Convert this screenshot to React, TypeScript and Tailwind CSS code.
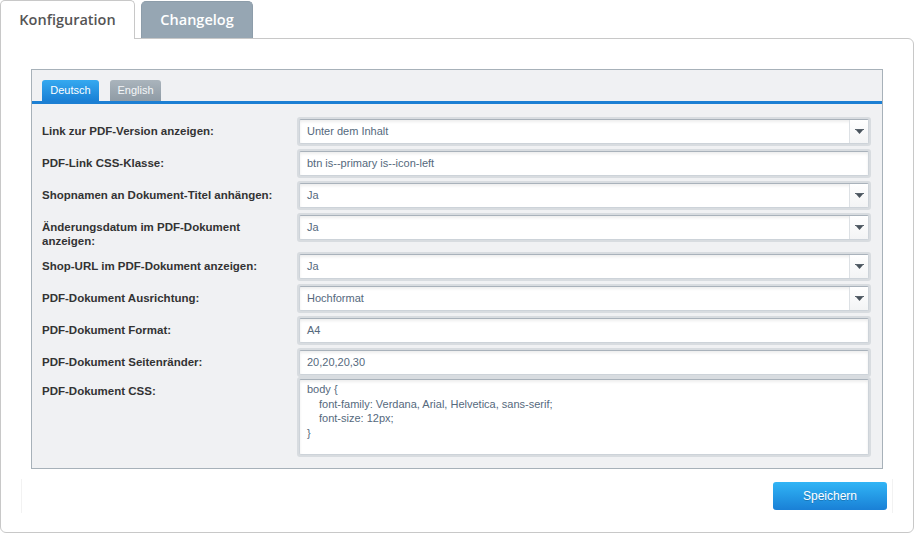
import React from "react";

type Row = {
  label: string;
  value: string;
  select?: boolean;
};

const rows: Row[] = [
  { label: "Link zur PDF-Version anzeigen:", value: "Unter dem Inhalt", select: true },
  { label: "PDF-Link CSS-Klasse:", value: "btn is--primary is--icon-left" },
  { label: "Shopnamen an Dokument-Titel anhängen:", value: "Ja", select: true },
  { label: "Änderungsdatum im PDF-Dokument anzeigen:", value: "Ja", select: true },
  { label: "Shop-URL im PDF-Dokument anzeigen:", value: "Ja", select: true },
  { label: "PDF-Dokument Ausrichtung:", value: "Hochformat", select: true },
  { label: "PDF-Dokument Format:", value: "A4" },
  { label: "PDF-Dokument Seitenränder:", value: "20,20,20,30" },
];

// small dark caret used in the select boxes
function Caret() {
  return (
    <svg width="9" height="6" viewBox="0 0 9 6">
      <rect x="0" y="0" width="9" height="1" fill="#5a646d" />
      <path d="M1 1 L8 1 L4.5 5 Z" fill="#4a545d" />
    </svg>
  );
}

function Field({ value, select }: { value: string; select?: boolean }) {
  return (
    <div className="flex-1 h-[29px] p-[2px] rounded-[3px] bg-[#d8dce0]">
      <div className="flex h-full bg-white border border-[#cdd3d9] border-t-[#a9b2bb] rounded-[2px] shadow-[inset_0_2px_3px_rgba(0,0,0,0.07)]">
        <div className="flex-1 flex items-center pl-[7px] text-[11px] text-[#55697d]">{value}</div>
        {select && (
          <div className="w-[19px] flex items-center justify-center border-l border-[#dde1e5] bg-gradient-to-b from-white to-[#f3f4f5]">
            <Caret />
          </div>
        )}
      </div>
    </div>
  );
}

function FormRow({ label, value, select }: Row) {
  return (
    <div className="flex items-start">
      <div className="w-[255px] pr-[15px] pt-[7px] pb-[1px] text-[11.5px] leading-[14px] font-bold text-[#333]">
        {label}
      </div>
      <Field value={value} select={select} />
    </div>
  );
}

export default function App() {
  return (
    <div className="w-[914px] h-[533px] bg-white font-['Liberation_Sans',Arial,sans-serif]">
      {/* top tabs */}
      <div className="flex items-end h-[38px]">
        <div className="relative z-10 -mb-px w-[135px] h-[39px] flex items-center justify-center bg-white border border-[#c8c8c8] border-b-0 rounded-t-[5px] font-['Open_Sans',sans-serif] font-semibold text-[14.5px] text-[#555]">
          Konfiguration
        </div>
        <div className="ml-[6px] w-[112px] h-[37px] flex items-center justify-center bg-[#96a6b3] border border-[#8d9daa] border-b-0 rounded-t-[5px] font-['Open_Sans',sans-serif] font-semibold text-[14.5px] text-white">
          Changelog
        </div>
      </div>

      {/* card */}
      <div className="h-[495px] border border-[#c8c8c8] rounded-b-[6px] rounded-tr-[6px] px-[30px] pt-[30px]">
        <div className="h-[400px] bg-[#f0f1f3] border border-[#a7b1b9]">
          <div className="flex gap-[11px] px-[10px] pt-[10px]">
            <div className="w-[57px] h-[21px] flex items-center justify-center rounded-t-[3px] bg-gradient-to-b from-[#35a9f0] to-[#1a80d5] text-[11px] text-white">
              Deutsch
            </div>
            <div className="w-[51px] h-[21px] flex items-center justify-center rounded-t-[3px] bg-gradient-to-b from-[#aab4bc] to-[#8f9ba5] text-[11px] text-[#f4f6f8]">
              English
            </div>
          </div>
          <div className="h-[3px] bg-[#1c7fd3]" />

          <div className="flex flex-col gap-[3px] pt-[13px] pl-[10px] pr-[11px]">
            {rows.map((r) => (
              <FormRow key={r.label} {...r} />
            ))}
            <div className="-mt-[3px] flex items-start">
              <div className="w-[255px] pt-[7px] text-[11.5px] leading-[14px] font-bold text-[#333]">
                PDF-Dokument CSS:
              </div>
              <div className="flex-1 h-[80px] p-[2px] rounded-[3px] bg-[#d8dce0]">
                <div className="h-full bg-white border border-[#cdd3d9] border-t-[#a9b2bb] rounded-[2px] shadow-[inset_0_2px_3px_rgba(0,0,0,0.07)] pl-[7px] pt-[2px] text-[11px] leading-[14.5px] text-[#55697d] whitespace-pre">
                  <div>body {"{"}</div>
                  <div className="pl-[12px]">font-family: Verdana, Arial, Helvetica, sans-serif;</div>
                  <div className="pl-[12px]">font-size: 12px;</div>
                  <div>{"}"}</div>
                </div>
              </div>
            </div>
          </div>
        </div>

        {/* footer */}
        <div className="-mx-[10px] mt-[10px] h-[34px] flex justify-end pt-[3px] pr-[5px] border-l border-r border-[#f2f2f2]">
          <button className="w-[114px] h-[28px] rounded-[3px] bg-gradient-to-b from-[#31b5f6] to-[#1a80d6] text-[12px] text-white [text-shadow:0_1px_0_rgba(0,0,0,0.2)]">
            Speichern
          </button>
        </div>
      </div>
    </div>
  );
}
